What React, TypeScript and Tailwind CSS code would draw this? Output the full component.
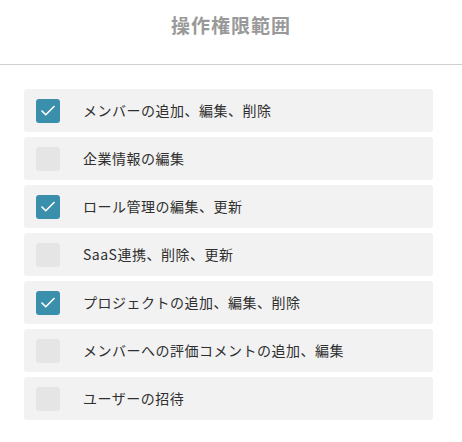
import { Check } from 'lucide-react';

const perms = [
  { label: 'メンバーの追加、編集、削除', on: true },
  { label: '企業情報の編集', on: false },
  { label: 'ロール管理の編集、更新', on: true },
  { label: 'SaaS連携、削除、更新', on: false },
  { label: 'プロジェクトの追加、編集、削除', on: true },
  { label: 'メンバーへの評価コメントの追加、編集', on: false },
  { label: 'ユーザーの招待', on: false },
];

export default function App() {
  return (
    <div
      className="w-[462px] h-[442px] bg-white"
      style={{ fontFamily: '"Noto Sans CJK JP", "Noto Sans", sans-serif' }}
    >
      <div className="h-[65px] flex items-center justify-center border-b border-[#cfcfcf]">
        <h2 className="text-[19px] font-bold text-[#999] tracking-[1px] -mt-[14px]">操作権限範囲</h2>
      </div>
      <div className="pl-6 pr-[29px] pt-6 flex flex-col gap-[5px]">
        {perms.map((p) => (
          <label key={p.label} className="flex items-center h-[43px] bg-[#f2f2f2] rounded-[3px] pl-3">
            <span
              className={
                'w-6 h-6 rounded-[3px] flex items-center justify-center ' +
                (p.on ? 'bg-[#3a8fad]' : 'bg-[#e5e5e5]')
              }
            >
              {p.on && <Check size={18} strokeWidth={2.2} className="text-white" />}
            </span>
            <span className="ml-[23px] text-[14px] text-[#2f2f2f] tracking-[0.5px]">{p.label}</span>
          </label>
        ))}
      </div>
    </div>
  );
}
